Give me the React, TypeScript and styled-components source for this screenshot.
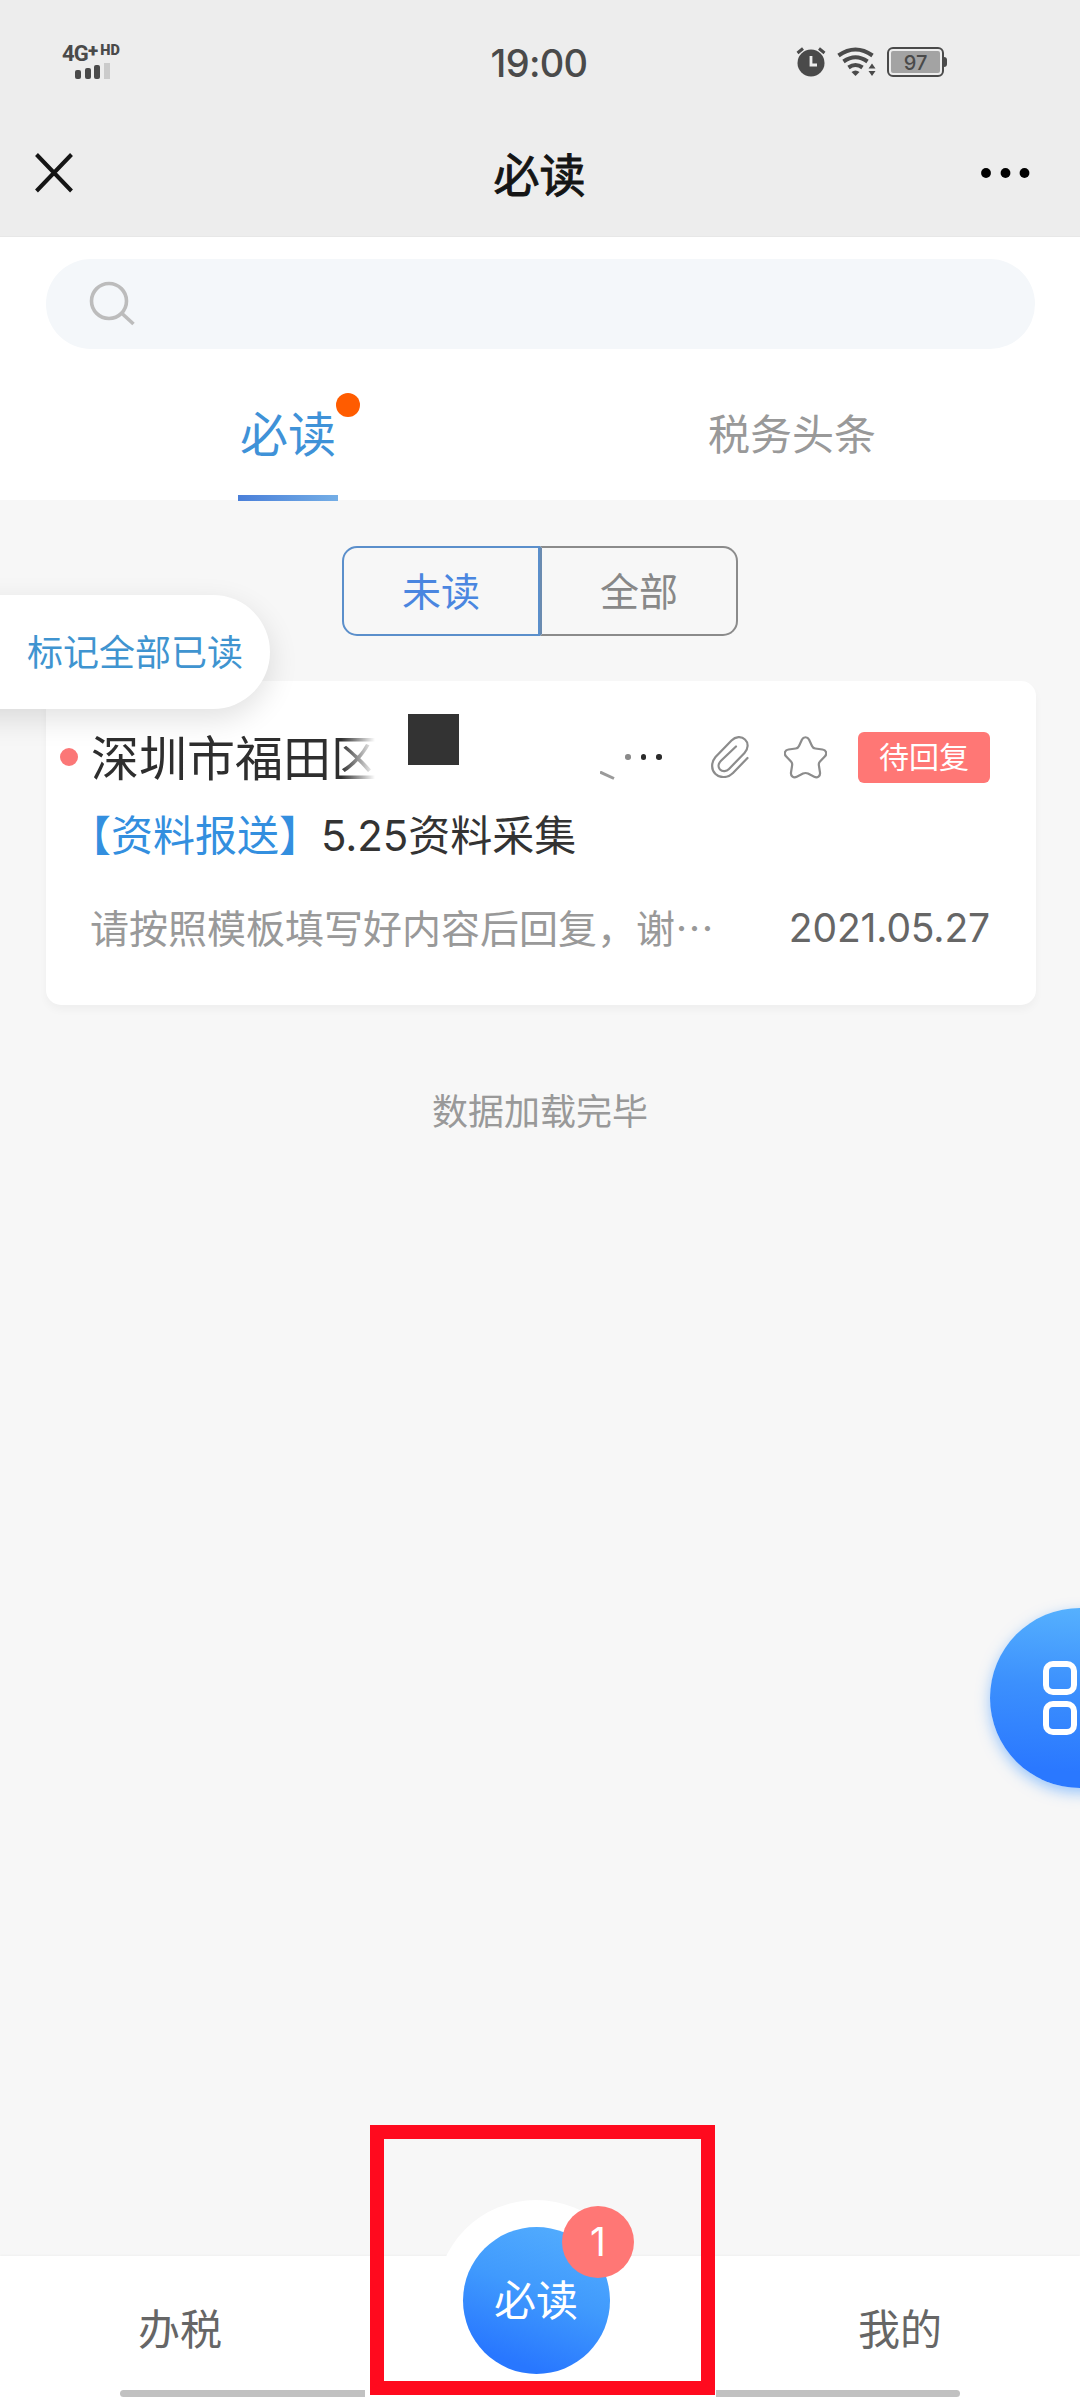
import React from "react";
import styled, { createGlobalStyle, css } from "styled-components";

const cjk = `"Noto Sans CJK SC", "Noto Sans", sans-serif`;
const latin = `Inter, "Noto Sans CJK SC", sans-serif`;

const GlobalStyle = createGlobalStyle`
  * { box-sizing: border-box; }
  html, body { margin: 0; padding: 0; }
  body { background: #f7f7f7; font-family: ${cjk}; }
`;

const Screen = styled.div`
  position: relative;
  width: 1080px;
  height: 2400px;
  overflow: hidden;
  display: flex;
  flex-direction: column;
  background: #f7f7f7;
`;

/* ---------- top chrome ---------- */

const StatusBar = styled.div`
  height: 124px;
  flex: none;
  display: grid;
  grid-template-columns: 1fr auto 1fr;
  align-items: center;
  padding: 0 133px 0 62px;
  background: #ededed;
  color: #4a4a4a;
`;

const Signal = styled.div`
  display: flex;
  flex-direction: column;
  width: 60px;
  height: 33px;
`;

const SignalLabel = styled.div`
  display: flex;
  align-items: flex-start;
  height: 17px;
  font: 700 22px/16px Roboto, sans-serif;
  letter-spacing: -0.8px;
`;

const SignalSuper = styled.span<{ $size: number; $gap?: number }>`
  font-size: ${(p) => p.$size}px;
  font-weight: 900;
  line-height: 10px;
  letter-spacing: 0;
  margin-left: ${(p) => p.$gap ?? 0}px;
`;

const SignalBars = styled.div`
  display: flex;
  align-items: flex-end;
  gap: 3.7px;
  height: 16px;
  margin-left: 13px;
`;

const SignalBar = styled.i<{ $height: number; $off?: boolean }>`
  width: 6px;
  height: ${(p) => p.$height}px;
  border-radius: ${(p) => (p.$off ? 0 : 2)}px;
  background: ${(p) => (p.$off ? "#cbcbcb" : "#4a4a4a")};
`;

const Clock = styled.div`
  font: 500 38px/40px ${latin};
  letter-spacing: -0.7px;
  margin: 1px 0 0 69px;
`;

const StatusIcons = styled.div`
  display: flex;
  align-items: center;
  justify-content: flex-end;
  gap: 11px;
  height: 31px;
`;

const Battery = styled.div`
  position: relative;
  width: 57px;
  height: 30px;
  margin-right: 3px;
  padding: 2px;
  border: 2.5px solid #4a4a4a;
  border-radius: 6px;
  background: #ededed;
  &::after {
    content: "";
    position: absolute;
    left: 55px;
    top: 8px;
    width: 3px;
    height: 10px;
    border-radius: 0 3px 3px 0;
    background: #4a4a4a;
  }
`;

const BatteryLevel = styled.div`
  height: 100%;
  border-radius: 2px;
  background: #a3a3a3;
  text-align: center;
  font: 500 20px/24px ${latin};
`;

const NavBar = styled.header`
  height: 113px;
  flex: none;
  display: flex;
  align-items: center;
  justify-content: space-between;
  padding: 0 50px 14px 35px;
  background: #ededed;
  border-bottom: 1px solid #e7e7e7;
`;

const NavTitle = styled.h1`
  margin: -2px 0 0 25px;
  font: 400 46px/60px ${cjk};
  color: #151515;
  -webkit-text-stroke: 1px #151515;
`;

/* ---------- search and tabs ---------- */

const Head = styled.section`
  height: 263px;
  flex: none;
  display: flex;
  flex-direction: column;
  background: #fff;
  padding: 22px 45px 0 46px;
`;

const SearchBox = styled.div`
  height: 90px;
  flex: none;
  border-radius: 45px;
  background: #f4f7fa;
  display: flex;
  align-items: center;
  padding-left: 43px;
`;

const Tabs = styled.nav`
  flex: 1;
  display: grid;
  grid-template-columns: 1fr 1fr;
  margin: 0 -9px 0 -10px;
`;

const Tab = styled.div<{ $active?: boolean }>`
  display: flex;
  flex-direction: column;
  align-items: center;
  justify-content: flex-end;
  font-size: ${(p) => (p.$active ? 48 : 42)}px;
  line-height: 60px;
  color: ${(p) => (p.$active ? "#3f92d8" : "#999")};
  padding-bottom: ${(p) => (p.$active ? 0 : 38)}px;
`;

const TabLabel = styled.span`
  position: relative;
  margin-bottom: 34px;
`;

const TabDot = styled.i`
  position: absolute;
  left: 96px;
  top: -8px;
  width: 24px;
  height: 24px;
  border-radius: 50%;
  background: #ff5c00;
`;

const TabLine = styled.i`
  width: 100px;
  height: 6px;
  margin-bottom: -1px;
  background: linear-gradient(90deg, #4a7fd9, #74aee6);
`;

/* ---------- filter ---------- */

const Segmented = styled.div`
  flex: none;
  align-self: center;
  display: flex;
  height: 90px;
  margin-top: 46px;
`;

const Segment = styled.div<{ $active?: boolean }>`
  width: 198px;
  display: flex;
  align-items: center;
  justify-content: center;
  font-size: 39px;
  line-height: 60px;
  padding-bottom: 4px;
  ${(p) =>
    p.$active
      ? css`
          color: #4a86e0;
          border: 2px solid #5b8fcb;
          border-radius: 15px 0 0 15px;
        `
      : css`
          color: #888;
          border: 2px solid #8b8b8b;
          border-left-color: #6a8bb0;
          border-radius: 0 15px 15px 0;
        `}
`;

const MarkAll = styled.button`
  position: absolute;
  left: -80px;
  top: 595px;
  width: 350px;
  height: 114px;
  padding: 0 0 4px 107px;
  border: 0;
  border-radius: 57px;
  background: #fff;
  box-shadow: 0 10px 30px rgba(0, 0, 0, 0.12);
  color: #3f94d0;
  font: 400 36px/60px ${cjk};
  text-align: left;
`;

/* ---------- message card ---------- */

const Card = styled.article`
  flex: none;
  margin: 45px 44px 0 46px;
  height: 324px;
  padding: 46px 46px 0 44px;
  border-radius: 15px;
  background: #fff;
  box-shadow: 0 5px 8px rgba(0, 0, 0, 0.035);
`;

const TitleRow = styled.div`
  display: flex;
  align-items: center;
  height: 60px;
  margin-left: -30px;
`;

const UnreadDot = styled.i`
  width: 18px;
  height: 18px;
  border-radius: 50%;
  background: #fb7777;
  margin-right: 13px;
`;

const Sender = styled.span`
  width: 288px;
  font-size: 48px;
  line-height: 60px;
  color: #2e2e2e;
  white-space: nowrap;
  margin-top: -4px;
  mask-image: linear-gradient(90deg, #000 250px, transparent 284px);
`;

const Redaction = styled.i`
  width: 51px;
  height: 51px;
  background: #333;
  align-self: flex-start;
  margin: -13px 141px 0 29px;
`;

const Dots = styled.span`
  display: flex;
  gap: 10px;
  margin-left: 9px;
  i {
    width: 5.5px;
    height: 5.5px;
    border-radius: 50%;
    background: #2b2b2b;
  }
  i:first-child {
    background: #8a8a8a;
  }
`;

const Remnant = styled.svg`
  margin-top: 38px;
`;

const Actions = styled.div`
  display: flex;
  align-items: center;
  margin-left: auto;
`;

const Tag = styled.span`
  width: 132px;
  height: 51px;
  border-radius: 6px;
  background: #ff7775;
  color: #fff;
  font-size: 30px;
  line-height: 46px;
  text-align: center;
  margin-left: 31px;
`;

const Subject = styled.div`
  height: 60px;
  margin: 19px 0 0 -21px;
  font: 400 42px/60px ${latin};
  color: #333;
  white-space: nowrap;
  b {
    font-weight: 400;
    color: #338fdf;
  }
`;

const Num = styled.span`
  letter-spacing: -0.1px;
`;

const MetaRow = styled.div`
  display: flex;
  align-items: center;
  justify-content: space-between;
  height: 60px;
  margin-top: 32px;
`;

const Preview = styled.span`
  font-size: 39px;
  line-height: 60px;
  margin-top: -5px;
  color: #999;
  white-space: nowrap;
`;

const DateText = styled.time`
  font: 400 39px/60px ${latin};
  letter-spacing: -0.15px;
  color: #666;
`;

const EndNote = styled.p`
  margin: 74px 0 0;
  text-align: center;
  font-size: 36px;
  line-height: 60px;
  color: #999;
`;

/* ---------- floating button and bottom bar ---------- */

const Fab = styled.div`
  position: absolute;
  left: 990px;
  top: 1608px;
  width: 180px;
  height: 180px;
  border-radius: 50%;
  background: linear-gradient(185deg, #55b0fe 5%, #3c90fd 45%, #2a78ff 88%);
  box-shadow: 0 5px 14px rgba(60, 150, 255, 0.5);
  display: grid;
  grid-template-columns: 34px 34px;
  grid-template-rows: 34px 34px;
  gap: 6px;
  place-content: center;
  i {
    border: 6px solid #fff;
    border-radius: 10px;
  }
`;

const BottomBar = styled.footer`
  position: relative;
  flex: none;
  height: 144px;
  margin-top: auto;
  display: grid;
  grid-template-columns: repeat(3, 360px);
  background: #fff;
  box-shadow: 0 -1px 2px rgba(0, 0, 0, 0.03);
`;

const BarItem = styled.div`
  text-align: center;
  font-size: 42px;
  line-height: 60px;
  padding-top: 41px;
  color: #666;
`;

const Halo = styled.div`
  position: absolute;
  left: 436px;
  top: -56px;
  width: 200px;
  height: 200px;
  border-radius: 50%;
  background: #fff;
  display: flex;
  align-items: center;
  justify-content: center;
`;

const CenterButton = styled.div`
  width: 147px;
  height: 147px;
  border-radius: 50%;
  background: linear-gradient(200deg, #52acfe 8%, #409afd 45%, #2877ff 85%);
  color: #fff;
  font-size: 42px;
  line-height: 141px;
  text-align: center;
`;

const Badge = styled.span`
  position: absolute;
  left: 126px;
  top: 6px;
  width: 72px;
  height: 72px;
  border-radius: 50%;
  background: #ff7775;
  color: #fff;
  font: 400 39px/72px ${latin};
  text-align: center;
`;

const HomeIndicator = styled.i<{ $side: "left" | "right" }>`
  position: absolute;
  top: 134px;
  height: 7px;
  background: #c1c1c1;
  left: ${(p) => (p.$side === "left" ? 120 : 716)}px;
  width: ${(p) => (p.$side === "left" ? 245 : 244)}px;
  border-radius: ${(p) => (p.$side === "left" ? "4px 0 0 4px" : "0 4px 4px 0")};
`;

const Highlight = styled.div`
  position: absolute;
  left: 370px;
  top: 2125px;
  width: 345px;
  height: 270px;
  border: 14px solid #ff0a1e;
`;

/* ---------- icons ---------- */

const AlarmIcon = () => (
  <svg width="30" height="30" viewBox="0 0 30 30">
    <circle cx="15" cy="16" r="13.5" fill="#4a4a4a" />
    <path d="M1.5 6 7 1.5M28.5 6 23 1.5" stroke="#4a4a4a" strokeWidth="3" />
    <path d="M15 9v9h6" stroke="#ededed" strokeWidth="2.8" fill="none" />
  </svg>
);

const WifiIcon = () => (
  <svg width="39" height="30" viewBox="0 0 39 30">
    <g fill="none" stroke="#4a4a4a" strokeWidth="4">
      <path d="M1.500 8.500Q18.500-3.500 35.500 8.500" />
      <path d="M6.500 14.500Q18.500 6 30.500 14.500" />
      <path d="M11.500 20.500Q18.500 15.500 25.500 20.500" />
    </g>
    <path d="M14.500 25Q18.500 22 22.500 25L18.500 29z" fill="#4a4a4a" />
    <path d="M31.500 21.500 35 16.500 38.500 21.500zM31.500 24 35 29 38.500 24z" fill="#4a4a4a" />
  </svg>
);

const CloseIcon = () => (
  <svg width="38" height="40" viewBox="0 0 38 40">
    <path d="M1.500 1.500 36.500 38M36.500 1.500 1.500 38" stroke="#151515" strokeWidth="4" />
  </svg>
);

const MoreIcon = () => (
  <svg width="49" height="10" viewBox="0 0 49 10">
    <circle cx="5" cy="5" r="4.900" />
    <circle cx="24.500" cy="5" r="4.900" />
    <circle cx="43.500" cy="5" r="4.900" />
  </svg>
);

const SearchIcon = () => (
  <svg width="48" height="46" viewBox="0 0 48 46" fill="none" stroke="#bcbcbc" strokeWidth="3.6">
    <circle cx="20" cy="20" r="17.500" />
    <path d="M32.500 32 44.500 43" />
  </svg>
);

const ClipIcon = () => (
  <svg width="38" height="42" viewBox="0 0 38 42" fill="none" stroke="#8c8c8c" strokeWidth="2.2" strokeLinecap="round">
    <path d="M36.500 22 22 37C17 42 9 42.500 4.500 38 0 33.500 0 26.500 4.500 21L20.500 4.500C24.500 0.500 30.500 0 34 3.500 37.800 7 37.300 13 33.500 17L18 33C15.500 35.500 11.500 36 9 33.500 6.700 31 7.300 27.500 10 24.800L25 10.500" />
  </svg>
);

const StarIcon = () => (
  <svg width="43" height="43" viewBox="0 0 43 43" fill="none" stroke="#8c8c8c" strokeWidth="2.2" strokeLinejoin="round">
    <path d="M18 3.500C19.500 0.500 23.500 0.500 25 3.500L28 10C28.600 11.400 29.800 12.300 31.300 12.500L38.500 13.500C42 14 43.500 17.500 41 20.200L36 25.500C35 26.600 34.600 28 34.900 29.500L36 36.500C36.500 40.200 33.500 42.300 30.200 40.700L24 37.600C22.300 36.800 20.700 36.800 19 37.600L12.800 40.700C9.500 42.300 6.500 40.200 7 36.500L8.100 29.500C8.400 28 8 26.600 7 25.500L2 20.200C-0.500 17.500 1 14 4.500 13.500L11.700 12.500C13.200 12.300 14.400 11.400 15 10Z" />
  </svg>
);

const StarSlot = styled.span`
  display: flex;
  margin-left: 35px;
`;

export default function App() {
  return (
    <>
      <GlobalStyle />
      <Screen>
        <StatusBar>
          <Signal>
            <SignalLabel>
              4G
              <SignalSuper $size={19}>+</SignalSuper>
              <SignalSuper $size={14.5} $gap={2}>HD</SignalSuper>
            </SignalLabel>
            <SignalBars>
              <SignalBar $height={9} />
              <SignalBar $height={11} />
              <SignalBar $height={14} />
              <SignalBar $height={16} $off />
            </SignalBars>
          </Signal>
          <Clock>19:00</Clock>
          <StatusIcons>
            <AlarmIcon />
            <WifiIcon />
            <Battery>
              <BatteryLevel>97</BatteryLevel>
            </Battery>
          </StatusIcons>
        </StatusBar>

        <NavBar>
          <CloseIcon />
          <NavTitle>必读</NavTitle>
          <MoreIcon />
        </NavBar>

        <Head>
          <SearchBox>
            <SearchIcon />
          </SearchBox>
          <Tabs>
            <Tab $active>
              <TabLabel>
                必读
                <TabDot />
              </TabLabel>
              <TabLine />
            </Tab>
            <Tab>税务头条</Tab>
          </Tabs>
        </Head>

        <Segmented>
          <Segment $active>未读</Segment>
          <Segment>全部</Segment>
        </Segmented>

        <Card>
          <TitleRow>
            <UnreadDot />
            <Sender>深圳市福田区</Sender>
            <Redaction />
            <Remnant width="16" height="11" viewBox="0 0 16 11">
              <path d="M0 1 14 7.500" stroke="#9a9a9a" strokeWidth="3" />
            </Remnant>
            <Dots>
              <i />
              <i />
              <i />
            </Dots>
            <Actions>
              <ClipIcon />
              <StarSlot>
                <StarIcon />
              </StarSlot>
              <Tag>待回复</Tag>
            </Actions>
          </TitleRow>
          <Subject>
            <b>【资料报送】</b>
            <Num>5.25</Num>资料采集
          </Subject>
          <MetaRow>
            <Preview>请按照模板填写好内容后回复，谢…</Preview>
            <DateText>2021.05.27</DateText>
          </MetaRow>
        </Card>

        <EndNote>数据加载完毕</EndNote>

        <MarkAll>标记全部已读</MarkAll>

        <Fab>
          <i />
          <i />
          <i />
          <i />
        </Fab>

        <BottomBar>
          <BarItem>办税</BarItem>
          <span />
          <BarItem>我的</BarItem>
          <HomeIndicator $side="left" />
          <HomeIndicator $side="right" />
          <Halo>
            <CenterButton>必读</CenterButton>
            <Badge>1</Badge>
          </Halo>
        </BottomBar>

        <Highlight />
      </Screen>
    </>
  );
}
